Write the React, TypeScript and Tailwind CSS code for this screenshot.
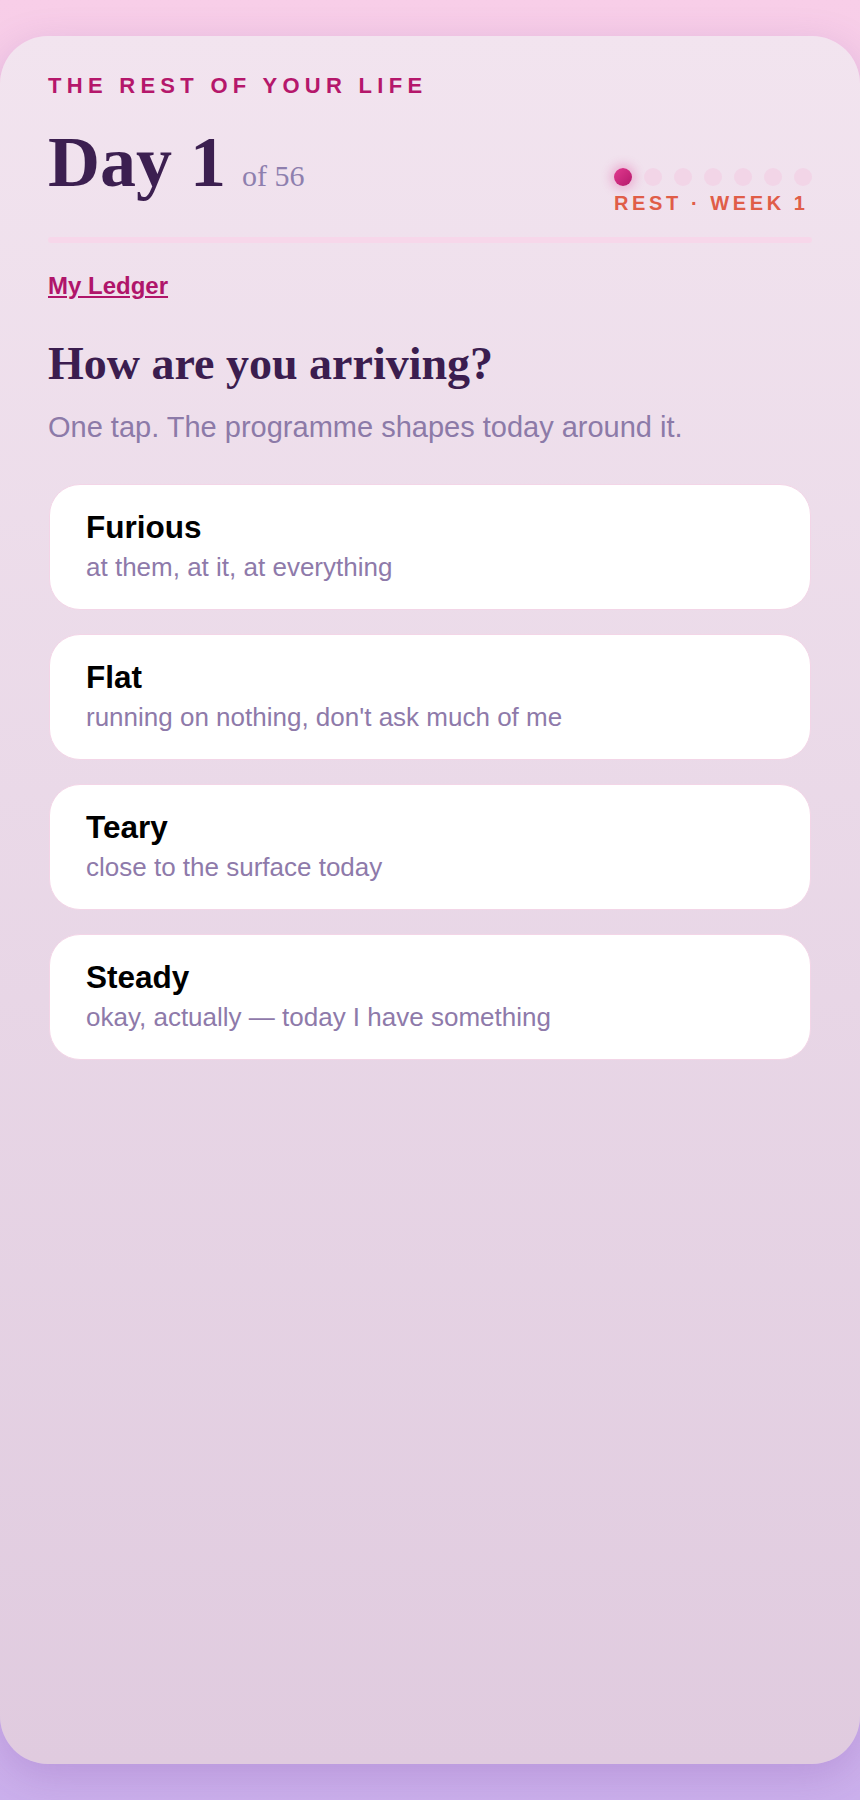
import React from "react";

const moods = [
  { title: "Furious", sub: "at them, at it, at everything" },
  { title: "Flat", sub: "running on nothing, don't ask much of me" },
  { title: "Teary", sub: "close to the surface today" },
  { title: "Steady", sub: "okay, actually — today I have something" },
];

export default function App() {
  return (
    <div className="min-h-[1800px] w-full bg-linear-to-b from-[#f8cee8] via-[#e6c2e6] to-[#cbb0ec] py-9 font-['Liberation_Sans',Arial,sans-serif]">
      <div className="min-h-[1728px] w-full rounded-[48px] bg-linear-to-b from-[#f2e4ef] to-[#e0cbdf] px-12 pt-[37px] shadow-[0_12px_40px_rgba(120,60,160,0.22)]">
        <div className="text-[22px] font-bold leading-[26px] tracking-[0.24em] text-[#b5176b]">
          THE REST OF YOUR LIFE
        </div>

        <div className="mt-[27px] flex items-start justify-between">
          <div className="flex items-baseline font-['Liberation_Serif','Times_New_Roman',serif]">
            <span className="text-[72px] font-bold leading-none text-[#3c1f50]">Day 1</span>
            <span className="ml-4 text-[30px] leading-none text-[#8e7fae]">of 56</span>
          </div>
          <div className="mt-[42px] flex w-[198px] flex-col items-start">
            <div className="flex gap-3">
              <div className="h-[18px] w-[18px] rounded-full bg-linear-to-br from-[#e2398f] to-[#b5186c] shadow-[0_0_10px_4px_rgba(222,70,150,0.28)]" />
              <div className="h-[18px] w-[18px] rounded-full bg-[#f2d5e7]" />
              <div className="h-[18px] w-[18px] rounded-full bg-[#f2d5e7]" />
              <div className="h-[18px] w-[18px] rounded-full bg-[#f2d5e7]" />
              <div className="h-[18px] w-[18px] rounded-full bg-[#f2d5e7]" />
              <div className="h-[18px] w-[18px] rounded-full bg-[#f2d5e7]" />
              <div className="h-[18px] w-[18px] rounded-full bg-[#f2d5e7]" />
            </div>
            <div className="mt-[5px] whitespace-nowrap text-[20px] font-bold leading-[24px] tracking-[0.18em] text-[#e05d48]">
              REST · WEEK 1
            </div>
          </div>
        </div>

        <div className="mt-[22px] h-[6px] w-full rounded-full bg-[#f7d7ea]" />

        <div className="mt-[30px] text-[24px] font-bold leading-[26px]">
          <a href="#" className="text-[#b0156a] underline">
            My Ledger
          </a>
        </div>

        <h1 className="mt-[39px] font-['Liberation_Serif','Times_New_Roman',serif] text-[46px] font-bold leading-[52px] text-[#3b1d4f]">
          How are you arriving?
        </h1>
        <p className="mt-[20px] text-[29px] leading-[34px] text-[#8c7aa8]">
          One tap. The programme shapes today around it.
        </p>

        <div className="mx-[1px] mt-[40px] flex flex-col gap-6">
          {moods.map((m) => (
            <div
              key={m.title}
              className="rounded-[31px] border border-[#f3d5e7] bg-white px-[36px] pb-[27px] pt-6"
            >
              <div className="text-[31.5px] font-bold leading-[36px] text-black">{m.title}</div>
              <div className="mt-[7px] text-[26px] leading-[30px] text-[#8e7aaa]">{m.sub}</div>
            </div>
          ))}
        </div>
      </div>
    </div>
  );
}
